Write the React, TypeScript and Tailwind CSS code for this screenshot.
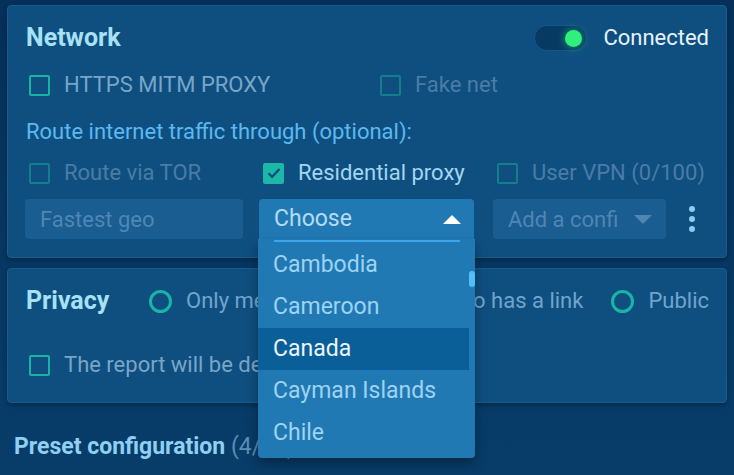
import React from 'react';

const font = { fontFamily: 'Roboto, "Noto Sans", sans-serif' };

function Box({ checked, dim }: { checked?: boolean; dim?: boolean }) {
  if (checked) {
    return (
      <span className="w-[21px] h-[21px] rounded-[2px] bg-[#1bb8a8] flex items-center justify-center shrink-0">
        <svg width="14" height="12" viewBox="0 0 14 12" fill="none">
          <path d="M1.5 6.2l3.6 3.6L12.5 2" stroke="#0c4c7c" strokeWidth="2.2" />
        </svg>
      </span>
    );
  }
  return (
    <span
      className={`w-[21px] h-[21px] rounded-[2px] border-2 shrink-0 ${dim ? 'border-[#137e8c]' : 'border-[#17b3a5]'}`}
    />
  );
}

function Check({ label, checked, dim, extra }: { label: string; checked?: boolean; dim?: boolean; extra?: string }) {
  return (
    <div className={`flex items-center pl-[4px] ${extra ?? ''}`}>
      <Box checked={checked} dim={dim} />
      <span
        className={`ml-[14px] text-[22px] leading-[26px] whitespace-nowrap ${
          checked ? 'text-[#a3d6f2]' : dim ? 'text-[#4a7ca6]' : 'text-[#78a6c9]'
        }`}
      >
        {label}
      </span>
    </div>
  );
}

function Radio({ label }: { label: string }) {
  return (
    <div className="flex items-center">
      <span className="w-[23px] h-[23px] rounded-full border-[3px] border-[#19b5a7] shrink-0" />
      <span className="ml-[14px] text-[22px] leading-[26px] text-[#6fa5cd] whitespace-nowrap">{label}</span>
    </div>
  );
}

const countries = ['Cambodia', 'Cameroon', 'Canada', 'Cayman Islands', 'Chile'];

export default function App() {
  return (
    <div className="w-[734px] h-[475px] overflow-hidden bg-gradient-to-b from-[#04305a] to-[#083d6a] pt-[5px]" style={font}>
      {/* Network */}
      <div className="mx-[7px] rounded-[4px] bg-[#0f4f80] border border-[#1a5c8d] shadow-[0_2px_4px_rgba(0,0,0,0.3)] pt-[19px] px-[17px] pb-[18px]">
        <div className="flex items-center justify-between h-[26px]">
          <span className="text-[25px] leading-[26px] font-bold text-[#a6e1f6] pl-[1px]">Network</span>
          <div className="flex items-center gap-[16px]">
            <div className="relative w-[53px] h-[26px] rounded-full bg-[#063a63] border border-[#15558a]">
              <span className="absolute right-[4px] top-[4px] w-[17px] h-[17px] rounded-full bg-[#2ff07c] shadow-[0_0_8px_rgba(47,240,124,0.6)]" />
            </div>
            <span className="text-[22px] leading-[26px] text-[#e6f3fb]">Connected</span>
          </div>
        </div>

        <div className="flex items-center mt-[21px]">
          <Check label="HTTPS MITM PROXY" extra="w-[351px]" />
          <Check label="Fake net" dim />
        </div>

        <div className="mt-[21px] text-[22px] leading-[26px] text-[#5bb9f0] pl-[1px]">
          Route internet traffic through (optional):
        </div>

        <div className="flex items-center mt-[15px]">
          <Check label="Route via TOR" dim extra="w-[234px]" />
          <Check label="Residential proxy" checked extra="w-[234px]" />
          <Check label="User VPN (0/100)" dim />
        </div>

        <div className="flex items-center mt-[13px]">
          <div className="w-[218px] h-[40px] rounded-[4px] bg-[#195d91] flex items-center px-[15px] text-[22px] text-[#4f86b3]">
            Fastest geo
          </div>
          <div className="relative w-[215px] h-[40px] ml-[16px]">
            <div className="h-[40px] rounded-t-[4px] bg-[#2179b4] flex items-center justify-between pl-[15px] pr-[13px] text-[23px] text-[#b5dbf3]">
              <span>Choose</span>
              <svg width="18" height="9" viewBox="0 0 18 9">
                <path d="M0 9L9 0l9 9z" fill="#ffffff" />
              </svg>
            </div>
            <div className="absolute z-10 left-[-1px] top-[40px] w-[217px] h-[219px] bg-[#2179b4] rounded-b-[4px] shadow-[0_6px_12px_rgba(0,0,0,0.35)] pt-[5px]">
              <div className="absolute left-[16px] right-[15px] top-[1px] h-[2px] bg-[#3ea6e8]" />
              <div className="absolute right-[0px] top-[32px] w-[6px] h-[16px] rounded-full bg-[#52bef7]" />
              {countries.map(c => (
                <div
                  key={c}
                  className={`h-[42px] mr-[6px] flex items-center pl-[15px] text-[23px] ${
                    c === 'Canada' ? 'bg-[#0b5f98] text-[#eaf5fc]' : 'text-[#9dd3f3]'
                  }`}
                >
                  {c}
                </div>
              ))}
            </div>
          </div>
          <div className="w-[173px] h-[40px] ml-[19px] rounded-[4px] bg-[#195d91] flex items-center pl-[15px] pr-[14px] text-[22px] text-[#4f86b3]">
            <span className="w-[110px] overflow-hidden whitespace-nowrap">Add a config</span>
            <svg className="ml-auto" width="18" height="9" viewBox="0 0 18 9">
              <path d="M0 0h18L9 9z" fill="#4f86b3" />
            </svg>
          </div>
          <div className="flex-1 flex flex-col items-center gap-[4px] pl-[8px]">
            <span className="w-[6px] h-[6px] rounded-full bg-[#8ccaf0]" />
            <span className="w-[6px] h-[6px] rounded-full bg-[#8ccaf0]" />
            <span className="w-[6px] h-[6px] rounded-full bg-[#8ccaf0]" />
          </div>
        </div>
      </div>

      {/* Privacy */}
      <div className="mx-[7px] mt-[10px] rounded-[4px] bg-[#0f4f80] border border-[#1a5c8d] shadow-[0_2px_4px_rgba(0,0,0,0.3)] pt-[19px] px-[17px] pb-[24px]">
        <div className="flex items-center h-[26px]">
          <span className="w-[124px] pl-[1px] text-[25px] leading-[26px] font-bold text-[#a6e1f6]">Privacy</span>
          <Radio label="Only me" />
          <div className="ml-auto flex items-center gap-[28px]">
            <Radio label="Anyone who has a link" />
            <Radio label="Public" />
          </div>
        </div>
        <div className="mt-[38px]">
          <Check label="The report will be deleted in 30 days" />
        </div>
      </div>

      <div className="mt-[30px] pl-[14px] text-[23px] leading-[28px] whitespace-nowrap">
        <span className="font-bold text-[#8fd0f2]">Preset configuration</span>
        <span className="text-[#5b8fb5]"> (4/10)</span>
      </div>
    </div>
  );
}
